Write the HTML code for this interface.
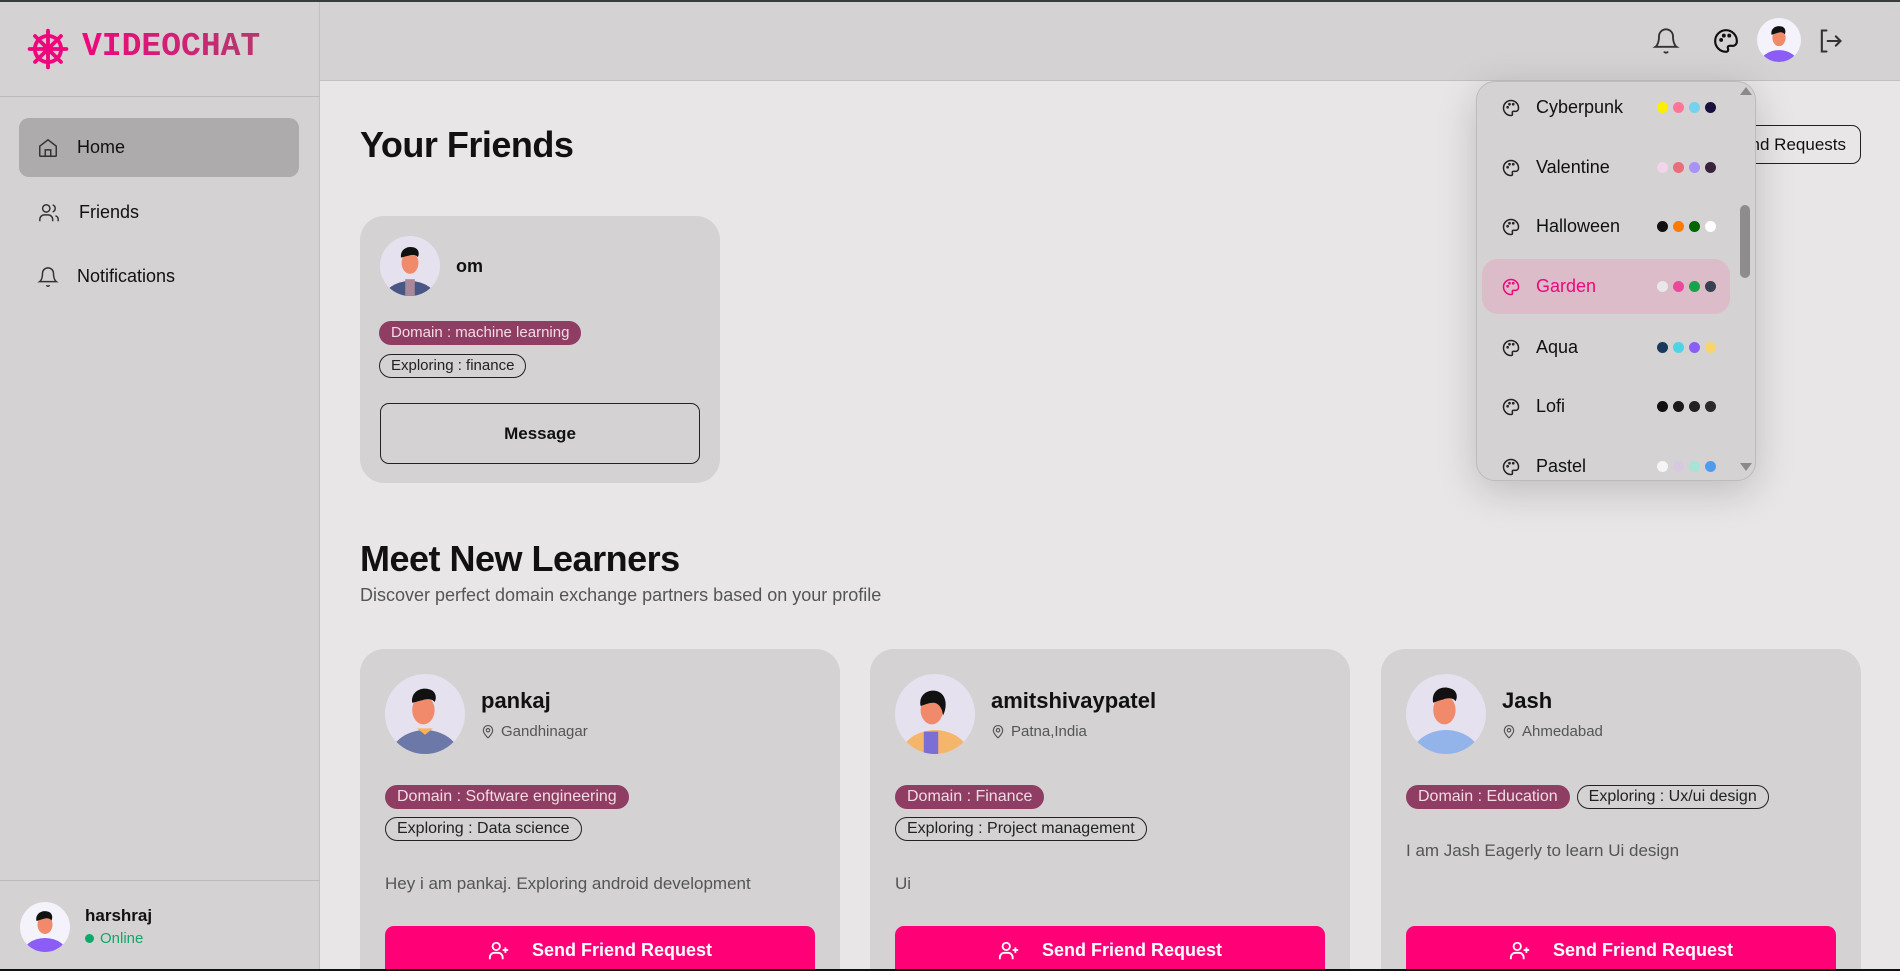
<!DOCTYPE html>
<html style="width:1900px;height:971px;overflow:hidden"><head><meta charset="utf-8"><style>
*{box-sizing:border-box;margin:0;padding:0}
body{width:1900px;height:971px;overflow:hidden;background:#e8e6e7;font-family:"Liberation Sans",sans-serif;color:#111;position:relative}
.abs{position:absolute}
.side{left:0;top:0;width:320px;height:971px;background:#d4d2d3;border-right:1px solid #c2c0c1}
.head{left:320px;top:0;width:1580px;height:81px;background:#d4d2d3;border-bottom:1px solid #c2c0c1}
.nav{position:absolute;left:19px;width:280px;height:59px;border-radius:10px;display:flex;align-items:center;padding-left:18px;font-size:18px;gap:18px}
.card{position:absolute;background:#d4d2d3;border-radius:24px}
.tag{display:inline-block;border-radius:14px;font-size:15px;padding:2px 12px;line-height:20px;white-space:nowrap}
.dom{background:#8f3d63;color:#f1dbe5}
.exp{border:1.5px solid #222;color:#222;padding:1px 11px}
.btn{position:absolute;background:#ff0077;color:#fff;border-radius:9px 9px 0 0;font-weight:bold;font-size:18px;display:flex;align-items:center;justify-content:center;gap:22px;height:43px;padding-top:6px}
.name{font-size:22px;font-weight:bold;position:absolute}
.loc{font-size:15px;color:#555;position:absolute;display:flex;align-items:center;gap:6px}
.bio{font-size:17px;color:#555;position:absolute}
.item{position:absolute;left:1482px;width:248px;height:55px;display:flex;align-items:center;font-size:18px}
.item svg{position:absolute;left:20px}
.item span{position:absolute;left:54px}
.dots{position:absolute;left:175px;display:flex;gap:5px}
.dots i{display:block;width:11px;height:11px;border-radius:50%}
</style></head><body>
<div class="abs" style="left:0;top:0;width:1900px;height:2px;background:#3a3d3e;z-index:9"></div>
<div class="abs" style="left:0;top:969px;width:1900px;height:2px;background:#111;z-index:9"></div>
<div class="abs side"></div>
<div class="abs head"></div>
<div class="abs" style="left:0;top:96px;width:320px;height:1px;background:#bdbbbc"></div>
<svg class="abs" style="left:27px;top:28px" width="42" height="42" viewBox="0 0 24 24" fill="none" stroke="#f0067c" stroke-width="2.2" stroke-linecap="round"><circle cx="12" cy="12" r="7.5"/><circle cx="12" cy="12" r="2"/><path d="M12 1.5v21M1.5 12h21M4.6 4.6l14.8 14.8M19.4 4.6L4.6 19.4"/></svg>
<div class="abs" style="left:82px;top:28px;font-family:'Liberation Mono',monospace;font-weight:bold;font-size:33px;letter-spacing:0px;background:linear-gradient(90deg,#f0067c,#b5386e);-webkit-background-clip:text;color:transparent">VIDEOCHAT</div>
<div class="nav" style="top:118px;background:#adabac"><svg width="22" height="22" viewBox="0 0 24 24" fill="none" stroke="#333" stroke-width="1.6"><path d="M3 10l9-7 9 7v10a1 1 0 0 1-1 1H4a1 1 0 0 1-1-1z"/><path d="M9 21v-7h6v7"/></svg>Home</div>
<div class="nav" style="top:183px"><svg width="24" height="22" viewBox="0 0 24 24" fill="none" stroke="#333" stroke-width="1.6"><circle cx="9" cy="7" r="4"/><path d="M2 21v-2a5 5 0 0 1 5-5h4a5 5 0 0 1 5 5v2M16 3.2a4 4 0 0 1 0 7.6M22 21v-2a4 4 0 0 0-3-3.9"/></svg>Friends</div>
<div class="nav" style="top:247px"><svg width="22" height="24" viewBox="0 0 24 24" fill="none" stroke="#333" stroke-width="1.6"><path d="M6 8a6 6 0 0 1 12 0c0 7 3 9 3 9H3s3-2 3-9M10.3 21a1.9 1.9 0 0 0 3.4 0"/></svg>Notifications</div>
<div class="abs" style="left:0;top:880px;width:320px;height:1px;background:#bdbbbc"></div>
<svg class="abs" style="left:20px;top:902px" width="50" height="50" viewBox="0 0 100 100"><defs><clipPath id="c0"><circle cx="50" cy="50" r="50"/></clipPath></defs><g clip-path="url(#c0)"><rect width="100" height="100" fill="#f4f2fa"/><ellipse cx="50" cy="105" rx="45" ry="33" fill="#8b5cf6"/><ellipse cx="50" cy="45" rx="15" ry="19" fill="#f08a6a"/><path d="M33 38c-3-14 10-22 22-19 10 2 11 12 8 18-4-6-12-5-17-3-5 1-8 3-13 4z" fill="#111"/></g></svg>
<div class="abs" style="left:85px;top:906px;font-size:17px;font-weight:bold">harshraj</div>
<div class="abs" style="left:85px;top:930px;font-size:15px;color:#10a868;display:flex;align-items:center;gap:6px"><i style="display:block;width:9px;height:9px;border-radius:50%;background:#10a868"></i>Online</div>
<svg class="abs" style="left:1652px;top:26px" width="28" height="30" viewBox="0 0 24 24" fill="none" stroke="#333" stroke-width="1.6"><path d="M6 8a6 6 0 0 1 12 0c0 7 3 9 3 9H3s3-2 3-9M10.3 21a1.9 1.9 0 0 0 3.4 0"/></svg>
<svg class="abs" style="left:1713px;top:28px" width="26" height="26" viewBox="0 0 24 24" fill="none" stroke="#111" stroke-width="2"><path d="M12 2a10 10 0 0 0 0 20c1.5 0 2-1 2-2 0-1.5-1-2 0-3s3-.5 4-.5A4 4 0 0 0 22 12 10 10 0 0 0 12 2z"/><circle cx="7.5" cy="11" r=".8" fill="#111"/><circle cx="10" cy="7" r=".8" fill="#111"/><circle cx="15" cy="7" r=".8" fill="#111"/></svg>
<svg class="abs" style="left:1757px;top:18px" width="44" height="44" viewBox="0 0 100 100"><defs><clipPath id="c1"><circle cx="50" cy="50" r="50"/></clipPath></defs><g clip-path="url(#c1)"><rect width="100" height="100" fill="#f4f2fa"/><ellipse cx="50" cy="108" rx="45" ry="35" fill="#8b5cf6"/><ellipse cx="50" cy="45" rx="15" ry="19" fill="#f08a6a"/><path d="M33 38c-3-14 10-22 22-19 10 2 11 12 8 18-4-6-12-5-17-3-5 1-8 3-13 4z" fill="#111"/></g></svg>
<svg class="abs" style="left:1816px;top:27px" width="28" height="28" viewBox="0 0 24 24" fill="none" stroke="#333" stroke-width="1.8" stroke-linecap="round"><path d="M9 3H5v18h4M10 12h11M17 8l4 4-4 4"/></svg>
<div class="abs" style="left:360px;top:124px;font-size:36px;font-weight:bold;letter-spacing:-0.5px">Your Friends</div>
<div class="abs" style="left:1700px;top:125px;width:161px;height:39px;border:1.5px solid #222;border-radius:9px;font-size:17px;display:flex;align-items:center;justify-content:flex-end;padding-right:14px">Friend Requests</div>
<div class="card" style="left:360px;top:216px;width:360px;height:267px">
<svg class="abs" style="left:20px;top:20px" width="60" height="60" viewBox="0 0 100 100"><defs><clipPath id="c2"><circle cx="50" cy="50" r="50"/></clipPath></defs><g clip-path="url(#c2)"><rect width="100" height="100" fill="#e6e1ef"/><ellipse cx="50" cy="108" rx="45" ry="33" fill="#4a5785"/><rect x="42" y="72" width="16" height="30" fill="#a7899a"/><ellipse cx="50" cy="45" rx="14" ry="18" fill="#f08a6a"/><path d="M35 36c-2-13 10-20 21-17 9 2 10 11 7 16-4-5-11-4-16-2-5 1-7 2-12 3z" fill="#111"/></g></svg>
<div class="abs" style="left:96px;top:40px;font-size:18px;font-weight:bold">om</div>
<div class="abs" style="left:19px;top:105px"><span class="tag dom">Domain : machine learning</span></div>
<div class="abs" style="left:19px;top:138px"><span class="tag exp">Exploring : finance</span></div>
<div class="abs" style="left:20px;top:187px;width:320px;height:61px;border:1.5px solid #222;border-radius:9px;display:flex;align-items:center;justify-content:center;font-size:17px;font-weight:bold">Message</div>
</div>
<div class="abs" style="left:360px;top:538px;font-size:36px;font-weight:bold;letter-spacing:-0.5px">Meet New Learners</div>
<div class="abs" style="left:360px;top:585px;font-size:18px;color:#555">Discover perfect domain exchange partners based on your profile</div>

<div class="card" style="left:360px;top:649px;width:480px;height:322px;border-radius:24px 24px 0 0">
<svg class="abs" style="left:25px;top:25px" width="80" height="80" viewBox="0 0 100 100"><defs><clipPath id="c3"><circle cx="50" cy="50" r="50"/></clipPath></defs><g clip-path="url(#c3)"><rect width="100" height="100" fill="#e6e1ef"/><ellipse cx="50" cy="108" rx="45" ry="38" fill="#6b78a8"/><path d="M40 68l10 8 10-8z" fill="#f5b35c"/><ellipse cx="48" cy="45" rx="14" ry="18" fill="#f08a6a"/><path d="M34 36c-2-13 10-20 21-17 9 2 10 11 7 16-4-5-11-4-16-2-5 1-7 2-12 3z" fill="#111"/></g></svg>
<div class="name" style="left:121px;top:39px">pankaj</div>
<div class="loc" style="left:121px;top:74px"><svg width="14" height="16" viewBox="0 0 24 24" fill="none" stroke="#555" stroke-width="2"><path d="M12 22s8-7 8-13a8 8 0 0 0-16 0c0 6 8 13 8 13z"/><circle cx="12" cy="9" r="3"/></svg>Gandhinagar</div>
<div class="abs" style="left:25px;top:136px"><span class="tag dom" style="font-size:16px">Domain : Software engineering</span></div>
<div class="abs" style="left:25px;top:168px"><span class="tag exp" style="font-size:16px">Exploring : Data science</span></div>
<div class="bio" style="left:25px;top:225px">Hey i am pankaj. Exploring android development</div>
</div>
<div class="card" style="left:870px;top:649px;width:480px;height:322px;border-radius:24px 24px 0 0">
<svg class="abs" style="left:25px;top:25px" width="80" height="80" viewBox="0 0 100 100"><defs><clipPath id="c4"><circle cx="50" cy="50" r="50"/></clipPath></defs><g clip-path="url(#c4)"><rect width="100" height="100" fill="#e6e1ef"/><ellipse cx="50" cy="108" rx="45" ry="38" fill="#f5b56a"/><rect x="36" y="72" width="18" height="30" fill="#7b6fd6"/><ellipse cx="46" cy="45" rx="14" ry="18" fill="#f08a6a"/><path d="M32 40c-3-16 12-22 22-18 10 4 12 18 6 30-1-10-6-16-12-16-6 0-9 2-16 4z" fill="#111"/></g></svg>
<div class="name" style="left:121px;top:39px">amitshivaypatel</div>
<div class="loc" style="left:121px;top:74px"><svg width="14" height="16" viewBox="0 0 24 24" fill="none" stroke="#555" stroke-width="2"><path d="M12 22s8-7 8-13a8 8 0 0 0-16 0c0 6 8 13 8 13z"/><circle cx="12" cy="9" r="3"/></svg>Patna,India</div>
<div class="abs" style="left:25px;top:136px"><span class="tag dom" style="font-size:16px">Domain : Finance</span></div>
<div class="abs" style="left:25px;top:168px"><span class="tag exp" style="font-size:16px">Exploring : Project management</span></div>
<div class="bio" style="left:25px;top:225px">Ui</div>
</div>
<div class="card" style="left:1381px;top:649px;width:480px;height:322px;border-radius:24px 24px 0 0">
<svg class="abs" style="left:25px;top:25px" width="80" height="80" viewBox="0 0 100 100"><defs><clipPath id="c5"><circle cx="50" cy="50" r="50"/></clipPath></defs><g clip-path="url(#c5)"><rect width="100" height="100" fill="#e6e1ef"/><ellipse cx="50" cy="108" rx="45" ry="38" fill="#93b4ea"/><ellipse cx="48" cy="45" rx="14" ry="18" fill="#f08a6a"/><path d="M34 36c-3-15 10-22 21-18 9 2 10 11 7 16-4-5-11-4-16-2-5 1-7 2-12 4z" fill="#111"/></g></svg>
<div class="name" style="left:121px;top:39px">Jash</div>
<div class="loc" style="left:121px;top:74px"><svg width="14" height="16" viewBox="0 0 24 24" fill="none" stroke="#555" stroke-width="2"><path d="M12 22s8-7 8-13a8 8 0 0 0-16 0c0 6 8 13 8 13z"/><circle cx="12" cy="9" r="3"/></svg>Ahmedabad</div>
<div class="abs" style="left:25px;top:136px;display:flex;gap:7px"><span class="tag dom" style="font-size:16px">Domain : Education</span><span class="tag exp" style="font-size:16px">Exploring : Ux/ui design</span></div>
<div class="bio" style="left:25px;top:192px">I am Jash Eagerly to learn Ui design</div>
</div>
<div class="btn" style="left:385px;top:926px;width:430px"><svg width="22" height="22" viewBox="0 0 24 24" fill="none" stroke="#fff" stroke-width="2"><circle cx="9" cy="7" r="4"/><path d="M2 21v-2a5 5 0 0 1 5-5h4a5 5 0 0 1 5 5v2M19 8v6M16 11h6"/></svg>Send Friend Request</div>
<div class="btn" style="left:895px;top:926px;width:430px"><svg width="22" height="22" viewBox="0 0 24 24" fill="none" stroke="#fff" stroke-width="2"><circle cx="9" cy="7" r="4"/><path d="M2 21v-2a5 5 0 0 1 5-5h4a5 5 0 0 1 5 5v2M19 8v6M16 11h6"/></svg>Send Friend Request</div>
<div class="btn" style="left:1406px;top:926px;width:430px"><svg width="22" height="22" viewBox="0 0 24 24" fill="none" stroke="#fff" stroke-width="2"><circle cx="9" cy="7" r="4"/><path d="M2 21v-2a5 5 0 0 1 5-5h4a5 5 0 0 1 5 5v2M19 8v6M16 11h6"/></svg>Send Friend Request</div>

<div class="abs" style="left:1476px;top:81px;width:280px;height:400px;background:#d4d2d3;border:1px solid #bdbbbc;border-radius:19px;box-shadow:0 10px 40px rgba(0,0,0,.18);overflow:hidden"></div>
<div class="abs" style="left:1482px;top:259px;width:248px;height:55px;background:#dbbcc8;border-radius:16px"></div>
<div class="abs" style="left:1740px;top:87px;width:0;height:0;border-left:6px solid transparent;border-right:6px solid transparent;border-bottom:8px solid #8a8a8a"></div>
<div class="abs" style="left:1740px;top:463px;width:0;height:0;border-left:6px solid transparent;border-right:6px solid transparent;border-top:8px solid #8a8a8a"></div>
<div class="abs" style="left:1740px;top:205px;width:10px;height:73px;background:#8e8c8d;border-radius:5px"></div>

<div class="item" style="top:80px"><svg width="18" height="18" viewBox="0 0 24 24" fill="none" stroke="#222" stroke-width="2"><path d="M12 2a10 10 0 0 0 0 20c1.5 0 2-1 2-2 0-1.5-1-2 0-3s3-.5 4-.5A4 4 0 0 0 22 12 10 10 0 0 0 12 2z"/><circle cx="7.5" cy="11" r=".8"/><circle cx="10" cy="7" r=".8"/><circle cx="15" cy="7" r=".8"/></svg><span>Cyberpunk</span><div class="dots"><i style="background:#ffee00"></i><i style="background:#ff7598"></i><i style="background:#75d1f0"></i><i style="background:#1a103d"></i></div></div>
<div class="item" style="top:140px"><svg width="18" height="18" viewBox="0 0 24 24" fill="none" stroke="#222" stroke-width="2"><path d="M12 2a10 10 0 0 0 0 20c1.5 0 2-1 2-2 0-1.5-1-2 0-3s3-.5 4-.5A4 4 0 0 0 22 12 10 10 0 0 0 12 2z"/><circle cx="7.5" cy="11" r=".8"/><circle cx="10" cy="7" r=".8"/><circle cx="15" cy="7" r=".8"/></svg><span>Valentine</span><div class="dots"><i style="background:#f0d6e8"></i><i style="background:#e96d7b"></i><i style="background:#a991f7"></i><i style="background:#37243c"></i></div></div>
<div class="item" style="top:199px"><svg width="18" height="18" viewBox="0 0 24 24" fill="none" stroke="#222" stroke-width="2"><path d="M12 2a10 10 0 0 0 0 20c1.5 0 2-1 2-2 0-1.5-1-2 0-3s3-.5 4-.5A4 4 0 0 0 22 12 10 10 0 0 0 12 2z"/><circle cx="7.5" cy="11" r=".8"/><circle cx="10" cy="7" r=".8"/><circle cx="15" cy="7" r=".8"/></svg><span>Halloween</span><div class="dots"><i style="background:#111"></i><i style="background:#ff7a00"></i><i style="background:#006400"></i><i style="background:#fff"></i></div></div>
<div class="item" style="top:259px;color:#f0067c"><svg width="18" height="18" viewBox="0 0 24 24" fill="none" stroke="#f0067c" stroke-width="2"><path d="M12 2a10 10 0 0 0 0 20c1.5 0 2-1 2-2 0-1.5-1-2 0-3s3-.5 4-.5A4 4 0 0 0 22 12 10 10 0 0 0 12 2z"/><circle cx="7.5" cy="11" r=".8"/><circle cx="10" cy="7" r=".8"/><circle cx="15" cy="7" r=".8"/></svg><span>Garden</span><div class="dots"><i style="background:#e9e7e7"></i><i style="background:#ec4899"></i><i style="background:#16a34a"></i><i style="background:#374151"></i></div></div>
<div class="item" style="top:320px"><svg width="18" height="18" viewBox="0 0 24 24" fill="none" stroke="#222" stroke-width="2"><path d="M12 2a10 10 0 0 0 0 20c1.5 0 2-1 2-2 0-1.5-1-2 0-3s3-.5 4-.5A4 4 0 0 0 22 12 10 10 0 0 0 12 2z"/><circle cx="7.5" cy="11" r=".8"/><circle cx="10" cy="7" r=".8"/><circle cx="15" cy="7" r=".8"/></svg><span>Aqua</span><div class="dots"><i style="background:#1a3a5c"></i><i style="background:#4dd4e6"></i><i style="background:#8b5cf6"></i><i style="background:#f7d56a"></i></div></div>
<div class="item" style="top:379px"><svg width="18" height="18" viewBox="0 0 24 24" fill="none" stroke="#222" stroke-width="2"><path d="M12 2a10 10 0 0 0 0 20c1.5 0 2-1 2-2 0-1.5-1-2 0-3s3-.5 4-.5A4 4 0 0 0 22 12 10 10 0 0 0 12 2z"/><circle cx="7.5" cy="11" r=".8"/><circle cx="10" cy="7" r=".8"/><circle cx="15" cy="7" r=".8"/></svg><span>Lofi</span><div class="dots"><i style="background:#111"></i><i style="background:#1a1a1a"></i><i style="background:#222"></i><i style="background:#2a2a2a"></i></div></div>
<div class="item" style="top:439px"><svg width="18" height="18" viewBox="0 0 24 24" fill="none" stroke="#222" stroke-width="2"><path d="M12 2a10 10 0 0 0 0 20c1.5 0 2-1 2-2 0-1.5-1-2 0-3s3-.5 4-.5A4 4 0 0 0 22 12 10 10 0 0 0 12 2z"/><circle cx="7.5" cy="11" r=".8"/><circle cx="10" cy="7" r=".8"/><circle cx="15" cy="7" r=".8"/></svg><span>Pastel</span><div class="dots"><i style="background:#f5f5f5"></i><i style="background:#d9c8e0"></i><i style="background:#a9e3d8"></i><i style="background:#4e9cf0"></i></div></div>
</body></html>
